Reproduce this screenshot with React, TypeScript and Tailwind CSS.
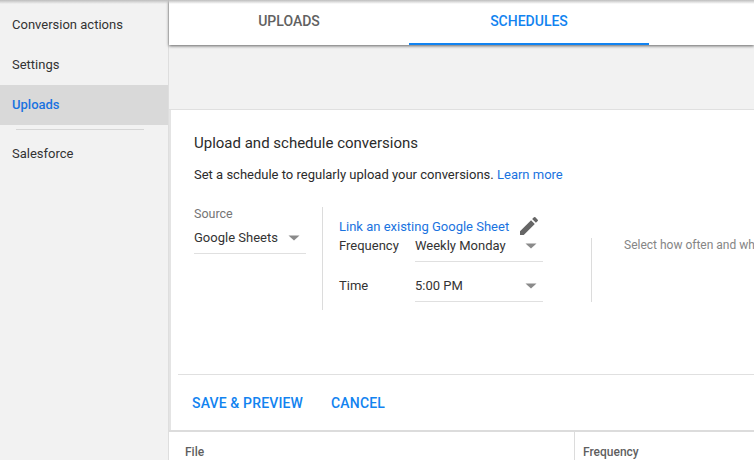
import React from "react";

const Caret = () => (
  <svg width="12" height="6" viewBox="0 0 12 6" className="shrink-0">
    <path d="M.5 .5h11L6 5.5z" fill="#8a8a8a" />
  </svg>
);

const Select = ({ label, className }: { label: string; className: string }) => (
  <div className={`flex items-center justify-between border-b border-[#e0e0e0] text-[13px] text-[#333] ${className}`}>
    <span>{label}</span>
    <Caret />
  </div>
);

export default function App() {
  return (
    <div className="relative flex h-[460px] w-[754px] overflow-hidden bg-[#f2f2f2] font-['Roboto',sans-serif] antialiased">
      {/* top page shadow */}
      <div className="absolute inset-x-0 top-0 z-20 h-[4px] bg-gradient-to-b from-[#bdbdbd] to-transparent" />

      {/* Sidebar */}
      <aside className="flex w-[169px] shrink-0 flex-col border-r border-[#dedede] pt-[5px] text-[13px] text-[#333]">
        <div className="flex h-10 items-center pl-3">Conversion actions</div>
        <div className="flex h-10 items-center pl-3">Settings</div>
        <div className="flex h-10 items-center bg-[#d9d9d9] pl-3 font-medium text-[#1a73e0]">Uploads</div>
        <div className="ml-4 mt-1 h-px w-[128px] bg-[#d6d6d6]" />
        <div className="flex h-10 items-center pl-3 pt-[7px]">Salesforce</div>
      </aside>

      <main className="flex min-w-0 flex-1 flex-col">
        {/* Tabs */}
        <div className="z-10 flex h-[45px] shrink-0 bg-white text-[14px] font-medium shadow-[0_1px_3px_rgba(0,0,0,0.6)]">
          <div className="flex w-[240px] items-center justify-center pb-[3px] text-[#616161]">UPLOADS</div>
          <div className="flex w-[240px] items-center justify-center border-b-2 border-[#1283f0] pb-[1px] text-[#1283f0]">SCHEDULES</div>
        </div>

        <div className="h-[65px] shrink-0 border-b border-[#e0e0e0] bg-[#f2f2f2]" />

        {/* Card */}
        <section className="flex h-[320px] shrink-0 flex-col border-l-2 border-[#e4e4e4] bg-white pl-[7px]">
          <div className="h-[264px] pl-4">
            <h2 className="mt-[24px] text-[15px] leading-[18px] text-[#2b2b2b]">Upload and schedule conversions</h2>
            <p className="mt-[14px] text-[13px] leading-[18px] text-[#2b2b2b]">
              Set a schedule to regularly upload your conversions. <span className="text-[#1a73e0]">Learn more</span>
            </p>

            <div className="mt-[22px] flex">
              <div className="w-[112px] shrink-0">
                <div className="text-[12.5px] leading-[15px] text-[#757575]">Source</div>
                <Select label="Google Sheets" className="mt-[1px] h-[32px] pr-[6px] pt-[1px]" />
              </div>

              <div className="ml-[16px] mt-[1px] h-[103px] w-px shrink-0 bg-[#dcdcdc]" />

              <div className="w-[220px] shrink-0 pl-[16px]">
                <div className="flex h-[30px] items-end justify-between">
                  <span className="text-[13px] leading-[18px] text-[#1a73e0]">Link an existing Google Sheet</span>
                  <svg width="24" height="24" viewBox="0 0 24 24" className="-mb-[2px] mr-[2px]" fill="#666">
                    <path d="M3 17.25V21h3.75L17.81 9.94l-3.75-3.75L3 17.25zM20.71 7.04a1 1 0 0 0 0-1.41l-2.34-2.34a1 1 0 0 0-1.41 0l-1.83 1.83 3.75 3.75 1.83-1.83z" />
                  </svg>
                </div>
                <div className="flex h-[26px] text-[13px] text-[#333]">
                  <span className="w-[76px] shrink-0 pt-[2px] leading-[16px]">Frequency</span>
                  <Select label="Weekly Monday" className="h-[26px] w-[128px] pb-[5px] pr-[6px]" />
                </div>
                <div className="mt-[14px] flex h-[26px] text-[13px] text-[#333]">
                  <span className="w-[76px] shrink-0 pt-[2px] leading-[16px]">Time</span>
                  <Select label="5:00 PM" className="h-[26px] w-[128px] pb-[5px] pr-[6px]" />
                </div>
              </div>

              <div className="ml-[48px] mt-[32px] h-[64px] w-px shrink-0 bg-[#dcdcdc]" />
              <div className="ml-[32px] mt-[31px] whitespace-nowrap text-[12px] leading-[16px] text-[#858585]">Select how often and wh</div>
            </div>
          </div>

          <div className="flex h-[55px] shrink-0 items-center gap-[28px] border-t border-[#e0e0e0] pl-[14px] pt-[3px] text-[14px] font-medium tracking-[0.15px] text-[#1283f0]">
            <span>SAVE &amp; PREVIEW</span>
            <span>CANCEL</span>
          </div>
        </section>

        {/* Table header */}
        <div className="flex min-h-0 flex-1 border-t-2 border-[#dcdcdc] bg-white text-[12px] font-medium leading-[14px] text-[#5f5f5f]">
          <div className="w-[406px] shrink-0 border-r border-[#dcdcdc] pl-4 pt-[13px]">File</div>
          <div className="pl-2 pt-[13px]">Frequency</div>
        </div>
      </main>
    </div>
  );
}
